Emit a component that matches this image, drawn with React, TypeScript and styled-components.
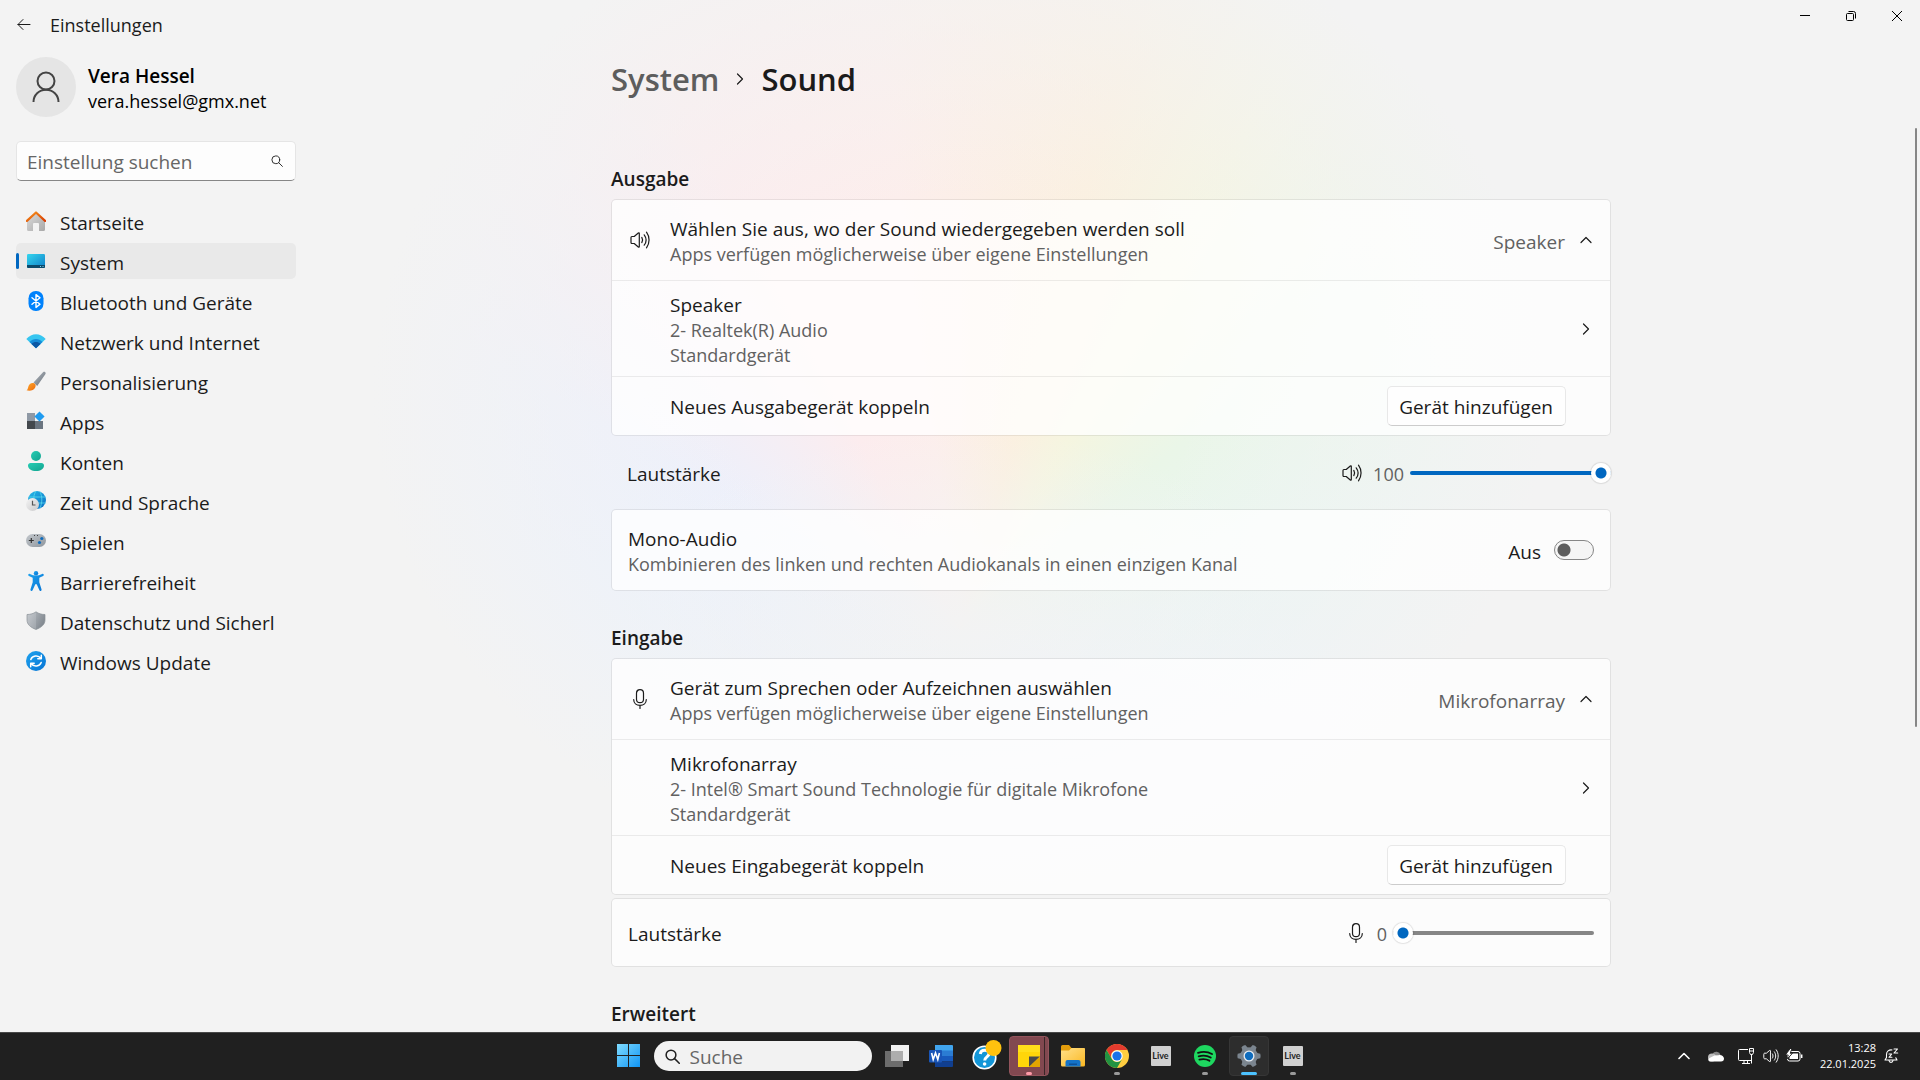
import React, { useState } from "react";
import styled, { createGlobalStyle } from "styled-components";

const GlobalStyle = createGlobalStyle`
  *, *::before, *::after { box-sizing: border-box; }
  body { margin: 0; background: #f3f3f3; }
  body, button, input { font-family: "Open Sans", "Noto Sans", sans-serif; }
  h1, h2, p, ul { margin: 0; padding: 0; font-weight: inherit; font-size: inherit; }
  svg { display: block; flex: none; }
`;

const Desktop = styled.div`
  height: 100vh;
  display: flex;
  flex-direction: column;
  overflow: hidden;
  font-size: 19px;
  line-height: 25px;
  color: #1b1b1b;
`;

const Window = styled.div`
  flex: 1;
  min-height: 0;
  display: flex;
  position: relative;
  overflow: hidden;
  background:
    radial-gradient(ellipse 34% 54% at 50% 38%, rgba(243, 243, 243, 0) 35%, #f3f3f3 90%),
    radial-gradient(ellipse 340px 190px at 50% 60%, rgba(243, 243, 243, 1), rgba(243, 243, 243, 0) 100%),
    conic-gradient(from -80deg at 50% 61%, #eaf1fd 0deg, #edf0fb 20deg, #fcecee 52deg, #fceeec 72deg, #fbf0e0 96deg, #f5f5e0 110deg, #eaf6e8 130deg, #e9f6f0 152deg, #eaf3fa 185deg, #eaf3fa 300deg, #eaf1fd 360deg);
`;

const Sidebar = styled.aside`
  flex: none;
  width: 302px;
  padding: 12px 6px 0 16px;
`;

const TitleRow = styled.header`
  display: flex;
  align-items: center;
  gap: 19px;
  height: 25px;
  font-size: 18px;
`;

const TitleText = styled.span`
  padding-top: 2px;
`;

const IconButton = styled.button`
  display: grid;
  place-items: center;
  padding: 0;
  border: 0;
  background: none;
  color: inherit;
`;

const Profile = styled.div`
  display: flex;
  align-items: center;
  gap: 12px;
  margin-top: 20px;
  color: #000;
`;

const ProfileText = styled.div`
  padding-top: 3px;
`;

const Avatar = styled.div`
  display: grid;
  place-items: center;
  width: 60px;
  height: 60px;
  border-radius: 50%;
  background: #e5e5e5;
`;

const Strong = styled.p`
  font-weight: 600;
`;

const Mail = styled.p`
  font-size: 18px;
`;

const SearchBox = styled.label`
  display: flex;
  align-items: center;
  width: 280px;
  height: 40px;
  margin: 24px 0 22px;
  padding: 0 12px 0 10px;
  border: 1px solid #e5e5e5;
  border-bottom-color: #868686;
  border-radius: 5px;
  background: #fdfdfd;
`;

const SearchInput = styled.input`
  flex: 1;
  min-width: 0;
  padding: 2px 0 0;
  border: 0;
  outline: 0;
  background: none;
  font-size: 19px;
  color: #1b1b1b;
  &::placeholder { color: #666; opacity: 1; }
`;

const NavList = styled.ul`
  display: flex;
  flex-direction: column;
  gap: 4px;
  list-style: none;
`;

const NavLink = styled.a<{ $active?: boolean }>`
  position: relative;
  display: flex;
  align-items: center;
  gap: 14px;
  width: 280px;
  height: 36px;
  padding-left: 10px;
  border-radius: 5px;
  background: ${(p) => (p.$active ? "#e9e9e9" : "transparent")};
  color: inherit;
  text-decoration: none;
  white-space: nowrap;
  &::before {
    content: "";
    display: ${(p) => (p.$active ? "block" : "none")};
    position: absolute;
    left: 0;
    top: 10px;
    width: 3px;
    height: 16px;
    border-radius: 2px;
    background: #0067c0;
  }
`;

const NavText = styled.span`
  padding-top: 4px;
`;

const Main = styled.main`
  flex: 1;
  min-width: 0;
  display: flex;
  justify-content: center;
`;

const Column = styled.div`
  flex: 1;
  max-width: 1000px;
  padding-top: 59px;
`;

const Heading = styled.h1`
  display: flex;
  align-items: center;
  gap: 15px;
  font-size: 31px;
  font-weight: 600;
  line-height: 40px;
`;

const Crumb = styled.a`
  color: #5d5d5d;
  text-decoration: none;
`;

const SectionTitle = styled.h2<{ $first?: boolean }>`
  margin: ${(p) => (p.$first ? "68px" : "35px")} 0 7px;
  font-weight: 600;
`;

const Card = styled.section<{ $top?: number }>`
  margin-top: ${(p) => p.$top ?? 0}px;
  border: 1px solid rgba(0, 0, 0, 0.07);
  border-radius: 5px;
  background: rgba(255, 255, 255, 0.76);
  background-clip: padding-box;
`;

const Row = styled.div<{ $height: number; $indent?: boolean; $right?: number }>`
  display: flex;
  align-items: center;
  min-height: ${(p) => p.$height}px;
  padding: 0 ${(p) => p.$right ?? 16}px 0 ${(p) => (p.$indent ? 58 : 16)}px;
  & + & { border-top: 1px solid rgba(0, 0, 0, 0.07); }
`;

const LeadIcon = styled.span`
  display: grid;
  place-items: center;
  width: 24px;
  margin-right: 18px;
`;

const Texts = styled.div`
  flex: 1;
  padding-top: 3px;
`;

const Sub = styled.p`
  font-size: 18px;
  color: #616161;
`;

const Value = styled.span`
  padding-top: 4px;
  margin-right: 13px;
  color: #616161;
`;

const Chevron = styled.span`
  display: grid;
  place-items: center;
  width: 16px;
`;

const AddButton = styled.button`
  height: 40px;
  padding: 2px 12px 0 11px;
  border: 1px solid #e8e8e8;
  border-bottom-color: #ccc;
  border-radius: 5px;
  background: #fefefe;
  color: #1b1b1b;
  font-size: 19px;
`;

const VolumeRow = styled.div<{ $loose?: boolean }>`
  display: flex;
  align-items: center;
  height: ${(p) => (p.$loose ? 73 : 67)}px;
  padding: ${(p) => (p.$loose ? "0 0 0 16px" : "0 16px")};
`;

const VolumeLabel = styled.label`
  flex: 1;
  padding-top: 3px;
`;

const VolumeValue = styled.output`
  margin: 0 6px 0 11px;
  padding-top: 3px;
  font-size: 18px;
  color: #616161;
`;

const Slider = styled.input<{ $fill: number }>`
  appearance: none;
  width: 201px;
  height: 20px;
  margin: 0;
  background: transparent;
  &::-webkit-slider-runnable-track {
    height: 4px;
    border-radius: 2px;
    background: linear-gradient(to right, #0067c0 ${(p) => p.$fill}%, #868686 ${(p) => p.$fill}%);
  }
  &::-webkit-slider-thumb {
    appearance: none;
    width: 20px;
    height: 20px;
    margin-top: -8px;
    border-radius: 50%;
    background: radial-gradient(circle, #0067c0 5px, #fff 6px);
    box-shadow: 0 0 1px 1px rgba(0, 0, 0, 0.1);
  }
`;

const Switch = styled.input`
  appearance: none;
  width: 40px;
  height: 20px;
  margin: 0 0 0 13px;
  border: 1px solid #868686;
  border-radius: 10px;
  background: radial-gradient(circle at 9px 9px, #5d5d5d 6px, #f5f5f5 7px);
  &:checked { background: radial-gradient(circle at 29px 9px, #fff 6px, #0067c0 7px); }
`;

const SwitchLabel = styled.label`
  display: flex;
  align-items: center;
`;

const SwitchText = styled.span`
  padding-top: 4px;
`;

const WindowButtons = styled.div`
  position: absolute;
  top: 0;
  right: 0;
  display: flex;
  & > button { width: 46px; height: 32px; }
`;

const ScrollThumb = styled.div`
  position: absolute;
  top: 128px;
  right: 3px;
  width: 2px;
  height: 58%;
  border-radius: 1px;
  background: #868686;
`;

const Taskbar = styled.footer`
  flex: none;
  position: relative;
  display: flex;
  align-items: center;
  justify-content: center;
  height: 48px;
  box-shadow: inset 0 1px #484848;
  background: #202020;
  color: #fff;
`;

const TaskSlot = styled.button<{ $tone?: "rose" | "active"; $mark?: string; $wide?: boolean }>`
  position: relative;
  display: grid;
  place-items: center;
  width: 40px;
  height: 40px;
  margin: 0 2px;
  padding: 0;
  border: 1px solid ${(p) => (p.$tone === "rose" ? "#93545c" : p.$tone ? "#363636" : "transparent")};
  border-radius: 4px;
  background: ${(p) => (p.$tone === "rose" ? "linear-gradient(90deg, #824850 34px, #3a2628 34px, #3a2628 35px, #824850 35px)" : p.$tone ? "#2d2d2d" : "none")};
  &::after {
    content: "";
    display: ${(p) => (p.$mark ? "block" : "none")};
    position: absolute;
    bottom: 0;
    width: ${(p) => (p.$wide ? 16 : 6)}px;
    height: 3px;
    border-radius: 2px;
    background: ${(p) => p.$mark};
  }
`;

const TaskSearch = styled.label`
  display: flex;
  align-items: center;
  gap: 10px;
  width: 218px;
  height: 30px;
  margin: 0 3px 0 4px;
  padding: 0 11px;
  border-radius: 15px;
  background: #f2f2f2;
  color: #202020;
`;

const Tray = styled.div`
  position: absolute;
  inset: 0 20px 0 auto;
  display: flex;
  align-items: center;
`;

const TrayItem = styled.button<{ $width: number }>`
  display: grid;
  place-items: center;
  width: ${(p) => p.$width}px;
  height: 40px;
  padding: 0;
  border: 0;
  background: none;
  color: #fff;
`;

const Clock = styled.time`
  margin: 0 6px 0 13px;
  font-size: 11px;
  line-height: 16px;
  text-align: right;
`;

const line = { fill: "none", stroke: "currentColor", strokeLinecap: "round", strokeLinejoin: "round" } as const;

const SpeakerIcon = ({ size = 20 }: { size?: number }) => (
  <svg width={size} height={size} viewBox="0 0 20 20" {...line} strokeWidth="1.2">
    <path d="M1 7.400c0-.5.4-.9.9-.9h2.300L8.300 3c.5-.4 1-.1 1 .4v13.200c0 .5-.5.8-1 .4l-4.100-3.500H1.900c-.5 0-.9-.4-.9-.9z" />
    <path d="M11.800 7.400c1 1.600 1 3.600 0 5.200M14.200 4.800c2.300 3.100 2.300 7.300 0 10.400M16.500 2.200c3.400 4.700 3.400 10.900 0 15.600" />
  </svg>
);

const MicIcon = () => (
  <svg width="20" height="20" viewBox="0 0 20 20" {...line} strokeWidth="1.2">
    <rect x="6.500" y="0.700" width="7" height="13" rx="3.500" />
    <path d="M3.700 10.500c0 3.500 2.700 5.900 6.300 5.900s6.300-2.400 6.300-5.900M10 16.500v2.900" />
  </svg>
);

const ChevronIcon = ({ up }: { up?: boolean }) => (
  <svg width="12" height="12" viewBox="0 0 12 12" {...line} strokeWidth="1.2">
    <path d={up ? "M1 8.500l5-5 5 5" : "M3.500 1l5 5-5 5"} />
  </svg>
);

const Magnifier = ({ size = 12, weight = 0.9 }: { size?: number; weight?: number }) => (
  <svg width={size} height={size} viewBox="0 0 12 12" {...line} strokeWidth={weight}>
    <circle cx="4.800" cy="4.800" r="3.900" />
    <path d="M7.700 7.700l3.700 3.700" />
  </svg>
);

const Defs = () => (
  <svg width="0" height="0" style={{ position: "absolute" }} aria-hidden="true">
    <defs>
      {[
        ["roof", "#f7941d", "#d83b01"],
        ["wall", "#dcdcdc", "#a8a8a8"],
        ["screen", "#35d6ee", "#0f7fc9"],
        ["handle", "#b4bac1", "#666e77"],
        ["tip", "#ffa92b", "#ee6a0c"],
        ["teal", "#26cdb4", "#12a38f"],
        ["globe", "#25b9e8", "#0a6fc4"],
        ["silver", "#f4f4f4", "#c9c9cb"],
        ["pad", "#c3c8cd", "#8e959c"],
        ["azure", "#1ea2ee", "#0774d4"],
        ["steelL", "#c6cacf", "#9fa5ab"],
        ["steelR", "#a7adb3", "#767d85"],
        ["tile", "#7fdbff", "#1095f4"],
        ["folder", "#ffe08a", "#fbb822"],
      ].map(([id, from, to]) => (
        <linearGradient key={id} id={id} x1="0" y1="0" x2="1" y2="1">
          <stop stopColor={from} />
          <stop offset="1" stopColor={to} />
        </linearGradient>
      ))}
    </defs>
  </svg>
);

const navArt: Record<string, React.ReactNode> = {
  home: (
    <>
      <path d="M1 9.500L10 1.500l9 8V18.500a1.500 1.500 0 0 1-1.500 1.500H13v-7a1 1 0 0 0-1-1H8a1 1 0 0 0-1 1v7H2.500A1.500 1.500 0 0 1 1 18.500z" fill="url(#wall)" />
      <path d="M.9 9.900L10 1.500l9.100 8.400" fill="none" stroke="url(#roof)" strokeWidth="2.2" strokeLinecap="round" strokeLinejoin="round" />
    </>
  ),
  system: (
    <>
      <rect x="1" y="3" width="18" height="14" rx="1.2" fill="url(#screen)" />
      <path d="M1 14h18v1.800a1.200 1.200 0 0 1-1.200 1.200H2.200A1.200 1.200 0 0 1 1 15.800z" fill="#0c4a6b" />
      <path d="M14 15.500h1M16.500 15.500h1" stroke="#7fd6f2" />
    </>
  ),
  bluetooth: (
    <>
      <rect x="2.500" width="15" height="20" rx="7.200" fill="#0082fc" />
      <path d="M6 6.800l8 6.400-4 3.200V3.600l4 3.200-8 6.400" fill="none" stroke="#fff" strokeWidth="1.4" strokeLinejoin="round" strokeLinecap="round" />
    </>
  ),
  wifi: (
    <>
      <path d="M.3 8C5.700 1.700 14.300 1.700 19.700 8L10 17.300z" fill="#36c5f0" />
      <path d="M3.500 11c3.700-4 9.300-4 13 0L10 17.300z" fill="#168bd8" />
      <path d="M5.500 13c2.500-2.600 6.500-2.600 9 0L10 17.300z" fill="#0b57a4" />
    </>
  ),
  brush: (
    <>
      <path d="M7.500 11.500L17 1.300c1.500-1.300 3.400.3 2.300 1.900L11.200 15z" fill="url(#handle)" />
      <path d="M.5 19.300c1.300-.8 1.400-2 1.800-3.600.6-2.500 2.900-4.300 5.200-3.700 2 .5 2.700 2.600 1.700 4.500-1.500 2.900-5.300 3.900-8.700 2.800z" fill="url(#tip)" />
    </>
  ),
  apps: (
    <>
      <path d="M1 2h8v8H1z" fill="#8f99a5" />
      <path d="M1 10h8v8H1z" fill="#43484d" />
      <path d="M9 10h8v8H9z" fill="#6b7580" />
      <path d="M13.500.4l5.100 5.100-5.100 5.100-5.100-5.100z" fill="#1f9bf0" />
    </>
  ),
  accounts: (
    <>
      <circle cx="10" cy="5" r="5" fill="url(#teal)" />
      <path d="M4.500 12h11c1.400 0 2.500 1 2.500 2.400 0 3.500-3.500 5.600-8 5.600s-8-2.100-8-5.600C2 13 3.100 12 4.500 12z" fill="url(#teal)" />
    </>
  ),
  time: (
    <>
      <circle cx="11" cy="9" r="9" fill="url(#globe)" />
      <path d="M3 6h16.500M11 12h9M10 0c-2 3-2.500 6-2 9M14 .8c2.500 5 2.300 11 0 16.300" stroke="#5fe0f0" strokeWidth=".9" fill="none" opacity=".8" />
      <circle cx="6.500" cy="13.500" r="6.500" fill="url(#silver)" />
      <path d="M6.500 9.800v4.200h3" stroke="#555" strokeWidth="1.2" fill="none" />
    </>
  ),
  games: (
    <>
      <rect y="3" width="20" height="13" rx="6.500" fill="url(#pad)" />
      <path d="M2.800 9.500h5M5.300 7v5" stroke="#333" strokeWidth="1.2" />
      <circle cx="15.800" cy="7.500" r="1.600" fill="#0f6cbd" />
      <circle cx="13.500" cy="11.500" r="1.600" fill="#0f6cbd" />
      <path d="M8 4.500h1M11 4.500h1" stroke="#444" />
    </>
  ),
  access: (
    <>
      <circle cx="10" cy="2.200" r="2.200" fill="url(#azure)" />
      <path d="M2.300 3.400c.3-.7 1-.8 1.600-.5 4 2 8.200 2 12.200 0 .6-.3 1.300-.2 1.600.5.300.7 0 1.200-.6 1.500l-3.800 1.900v4.500l2.200 7c.2.800 0 1.400-.7 1.600-.7.200-1.300-.1-1.500-.8L10.800 13.500c-.3-.8-1.300-.8-1.600 0l-2.500 5.600c-.3.700-.9 1-1.500.8-.7-.3-.9-.9-.7-1.600l2.200-7V6.800L2.900 4.900c-.6-.3-.9-.8-.6-1.500z" fill="url(#azure)" />
    </>
  ),
  shield: (
    <>
      <path d="M10 .8C7.500 2.600 4.500 3.500 1 3.500v5.500c0 4.500 3.500 7.300 9 9.500z" fill="url(#steelL)" />
      <path d="M10 .8c2.500 1.800 5.500 2.700 9 2.700v5.500c0 4.500-3.500 7.300-9 9.500z" fill="url(#steelR)" />
      <path d="M10 .8c2.500 1.800 5.500 2.700 9 2.700v5.500c0 4.500-3.500 7.300-9 9.500-5.500-2.200-9-5-9-9.500v-5.500c3.500 0 6.500-.9 9-2.700z" fill="none" stroke="#8a9097" strokeWidth=".7" />
    </>
  ),
  update: (
    <>
      <circle cx="10" cy="10" r="10" fill="url(#azure)" />
      <path d="M4.800 8.500C6.200 4.700 12 3.600 15 7.500M15.300 4.300v3.500h-3.500M15.200 11.500c-1.400 3.800-7.200 4.900-10.200 1M4.700 15.700v-3.500h3.500" fill="none" stroke="#fff" strokeWidth="1.5" strokeLinecap="round" strokeLinejoin="round" />
    </>
  ),
};

const navItems = [
  ["home", "Startseite"],
  ["system", "System"],
  ["bluetooth", "Bluetooth und Geräte"],
  ["wifi", "Netzwerk und Internet"],
  ["brush", "Personalisierung"],
  ["apps", "Apps"],
  ["accounts", "Konten"],
  ["time", "Zeit und Sprache"],
  ["games", "Spielen"],
  ["access", "Barrierefreiheit"],
  ["shield", "Datenschutz und Sicherl"],
  ["update", "Windows Update"],
];

const LiveText = styled.span`
  display: grid;
  place-items: center;
  width: 20px;
  height: 20px;
  border-radius: 1px;
  background: #d0d0d0;
  color: #222;
  font: 700 9px/20px Lato, sans-serif;
`;

const WordArt = () => (
  <svg width="24" height="22" viewBox="0 0 24 22">
    <path d="M6 0h17a1 1 0 0 1 1 1v5H6z" fill="#41a5ee" />
    <path d="M6 5.500h18V11H6z" fill="#2b7cd3" />
    <path d="M6 11h18v5.500H6z" fill="#185abd" />
    <path d="M6 16.500h18V21a1 1 0 0 1-1 1H6z" fill="#103f91" />
    <rect y="5" width="13" height="12.500" rx="1" fill="#1a56b8" />
    <path d="M2.600 8l1.600 6.500L6.500 8l2.300 6.500L10.400 8" fill="none" stroke="#fff" strokeWidth="1.6" />
  </svg>
);

const HelpArt = () => (
  <svg width="34" height="34" viewBox="0 0 34 34">
    <circle cx="16.500" cy="18.500" r="11.300" fill="#1396d8" stroke="#fff" strokeWidth="1.6" />
    <path d="M12.300 15c.5-5.200 9-5 8.700 0-.3 3-4.300 3-4.300 6.500" fill="none" stroke="#fff" strokeWidth="3" />
    <circle cx="16.600" cy="25" r="1.800" fill="#fff" />
    <circle cx="25.500" cy="9" r="8" fill="#ffc20e" />
  </svg>
);

const NotesArt = () => (
  <svg width="22" height="22" viewBox="0 0 22 22">
    <path d="M0 0h22v22H0z" fill="#ffd60a" />
    <path d="M0 0h22v7H0z" fill="#ffdf1b" />
    <path d="M11 22V11.500h11z" fill="#4a4a4a" />
    <path d="M11 22l11-10.500V22z" fill="#e3a500" />
  </svg>
);

const FolderArt = () => (
  <svg width="24" height="22" viewBox="0 0 24 22">
    <path d="M0 1.500A1.500 1.500 0 0 1 1.500 0H8l2.500 3H22a2 2 0 0 1 2 2v4H0z" fill="#e39d0c" />
    <path d="M0 5.500h8L10.500 3H23a1 1 0 0 1 1 1v16a1.500 1.500 0 0 1-1.500 1.500h-21A1.500 1.500 0 0 1 0 20z" fill="url(#folder)" />
    <path d="M4.500 21.500V17a2 2 0 0 1 2-2h11a2 2 0 0 1 2 2v4.500z" fill="#1473c8" />
    <path d="M8 18.500h8V20H8z" fill="#0d5299" />
  </svg>
);

const ChromeArt = () => (
  <svg width="24" height="24" viewBox="0 0 24 24">
    <circle cx="12" cy="12" r="12" fill="#ffcd40" />
    <path d="M1.600 6A12 12 0 0 1 22.400 6H12a6 6 0 0 0-5.200 9z" fill="#e33b2e" />
    <path d="M1.600 6A12 12 0 0 0 12 24l5.200-9A6 6 0 0 1 6.800 15z" fill="#229342" />
    <circle cx="12" cy="12" r="5.700" fill="#fff" />
    <circle cx="12" cy="12" r="4.600" fill="#1a73e8" />
  </svg>
);

const SpotifyArt = () => (
  <svg width="22" height="22" viewBox="0 0 22 22">
    <circle cx="11" cy="11" r="11" fill="#1ed760" />
    <path d="M4 7.800c4.800-1.400 10-1 14 1.200M4.700 11.300c4.200-1.200 8.500-.8 12 1.200M5.400 14.600c3.500-.9 7-.6 10 1.100" fill="none" stroke="#111" strokeWidth="1.9" strokeLinecap="round" />
  </svg>
);

const GearArt = () => (
  <svg width="24" height="24" viewBox="0 0 24 24">
    {[0, 60, 120, 180, 240, 300].map((a) => (
      <path key={a} d="M8.800 5l1-4.300q2.200-.6 4.400 0l1 4.300z" fill="#7b858f" transform={`rotate(${a + 30} 12 12)`} />
    ))}
    <circle cx="12" cy="12" r="8.800" fill="#7b858f" />
    <circle cx="12" cy="12" r="5.500" fill="#e8edf2" />
    <circle cx="12" cy="12" r="4.200" fill="#0f6cbd" />
  </svg>
);

const tasks: { name: string; art: React.ReactNode; tone?: "rose" | "active"; mark?: string; wide?: boolean }[] = [
  {
    name: "Aktive Anwendungen",
    art: (
      <svg width="24" height="22" viewBox="0 0 24 22">
        <path d="M6 0h18v16H6z" fill="#f1f1f1" />
        <path d="M0 6h18v16H0z" fill="#6d6d6d" />
        <path d="M6 6h12v10H6z" fill="#adadad" />
      </svg>
    ),
  },
  { name: "Word", art: <WordArt /> },
  { name: "Hilfe", art: <HelpArt /> },
  { name: "Kurznotizen", art: <NotesArt />, tone: "rose", mark: "#ff9aa8" },
  { name: "Explorer", art: <FolderArt /> },
  { name: "Chrome", art: <ChromeArt />, mark: "#9a9a9a" },
  { name: "Live", art: <LiveText>Live</LiveText> },
  { name: "Spotify", art: <SpotifyArt />, mark: "#9a9a9a" },
  { name: "Einstellungen", art: <GearArt />, tone: "active", mark: "#4cc2ff", wide: true },
  { name: "Live 2", art: <LiveText>Live</LiveText>, mark: "#9a9a9a" },
];

interface DeviceCardProps {
  icon: React.ReactNode;
  title: string;
  device: string;
  detail: string;
  pair: string;
}

const DeviceCard = ({ icon, title, device, detail, pair }: DeviceCardProps) => (
  <Card>
    <Row $height={80}>
      <LeadIcon>{icon}</LeadIcon>
      <Texts>
        <p>{title}</p>
        <Sub>Apps verfügen möglicherweise über eigene Einstellungen</Sub>
      </Texts>
      <Value>{device}</Value>
      <Chevron><ChevronIcon up /></Chevron>
    </Row>
    <Row $height={96} $indent>
      <Texts>
        <p>{device}</p>
        <Sub>{detail}</Sub>
        <Sub>Standardgerät</Sub>
      </Texts>
      <Chevron><ChevronIcon /></Chevron>
    </Row>
    <Row $height={59} $indent $right={44}>
      <Texts>{pair}</Texts>
      <AddButton type="button">Gerät hinzufügen</AddButton>
    </Row>
  </Card>
);

interface VolumeProps {
  id: string;
  icon: React.ReactNode;
  initial: number;
  loose?: boolean;
}

const Volume = ({ id, icon, initial, loose }: VolumeProps) => {
  const [value, setValue] = useState(initial);
  return (
    <VolumeRow $loose={loose}>
      <VolumeLabel htmlFor={id}>Lautstärke</VolumeLabel>
      {icon}
      <VolumeValue htmlFor={id}>{value}</VolumeValue>
      <Slider id={id} type="range" min={0} max={100} value={value} $fill={value} onChange={(e) => setValue(Number(e.target.value))} />
    </VolumeRow>
  );
};

export default function App() {
  const [mono, setMono] = useState(false);
  return (
    <Desktop>
      <GlobalStyle />
      <Defs />
      <Window>
        <Sidebar>
          <TitleRow>
            <IconButton type="button" aria-label="Zurück">
              <svg width="15" height="12" viewBox="0 0 15 12" {...line} strokeWidth="1">
                <path d="M14 5.500H2M7 .5l-5 5 5 5" />
              </svg>
            </IconButton>
            <TitleText>Einstellungen</TitleText>
          </TitleRow>
          <Profile>
            <Avatar>
              <svg width="28" height="32" viewBox="0 0 28 32" fill="none" stroke="#444" strokeWidth="2">
                <circle cx="14" cy="10" r="8.500" />
                <path d="M1.500 31c0-7 5.500-12.300 12.500-12.300S26.500 24 26.500 31" />
              </svg>
            </Avatar>
            <ProfileText>
              <Strong>Vera Hessel</Strong>
              <Mail>vera.hessel@gmx.net</Mail>
            </ProfileText>
          </Profile>
          <SearchBox>
            <SearchInput type="search" placeholder="Einstellung suchen" aria-label="Einstellung suchen" />
            <Magnifier />
          </SearchBox>
          <nav>
            <NavList>
              {navItems.map(([key, label]) => (
                <li key={key}>
                  <NavLink href={`#${key}`} $active={key === "system"}>
                    <svg width="20" height="20" viewBox="0 0 20 20">{navArt[key]}</svg>
                    <NavText>{label}</NavText>
                  </NavLink>
                </li>
              ))}
            </NavList>
          </nav>
        </Sidebar>
        <Main>
          <Column>
            <Heading>
              <Crumb href="#system">System</Crumb>
              <ChevronIcon />
              <span>Sound</span>
            </Heading>
            <SectionTitle $first>Ausgabe</SectionTitle>
            <DeviceCard
              icon={<SpeakerIcon />}
              title="Wählen Sie aus, wo der Sound wiedergegeben werden soll"
              device="Speaker"
              detail="2- Realtek(R) Audio"
              pair="Neues Ausgabegerät koppeln"
            />
            <Volume id="output-volume" icon={<SpeakerIcon />} initial={100} loose />
            <Card>
              <Row $height={80}>
                <Texts>
                  <p>Mono-Audio</p>
                  <Sub>Kombinieren des linken und rechten Audiokanals in einen einzigen Kanal</Sub>
                </Texts>
                <SwitchLabel>
                  <SwitchText>{mono ? "Ein" : "Aus"}</SwitchText>
                  <Switch type="checkbox" role="switch" checked={mono} onChange={(e) => setMono(e.target.checked)} />
                </SwitchLabel>
              </Row>
            </Card>
            <SectionTitle>Eingabe</SectionTitle>
            <DeviceCard
              icon={<MicIcon />}
              title="Gerät zum Sprechen oder Aufzeichnen auswählen"
              device="Mikrofonarray"
              detail="2- Intel® Smart Sound Technologie für digitale Mikrofone"
              pair="Neues Eingabegerät koppeln"
            />
            <Card $top={3}>
              <Volume id="input-volume" icon={<MicIcon />} initial={0} />
            </Card>
            <SectionTitle>Erweitert</SectionTitle>
          </Column>
        </Main>
        <WindowButtons>
          <IconButton type="button" aria-label="Minimieren">
            <svg width="10" height="10" viewBox="0 0 10 10" stroke="#000"><path d="M0 4.500h10" /></svg>
          </IconButton>
          <IconButton type="button" aria-label="Wiederherstellen">
            <svg width="10" height="10" viewBox="0 0 10 10" fill="none" stroke="#000">
              <rect x=".5" y="2.500" width="7" height="7" rx="1" />
              <path d="M2.500.5H7.500a2 2 0 0 1 2 2V7.500" />
            </svg>
          </IconButton>
          <IconButton type="button" aria-label="Schließen">
            <svg width="10" height="10" viewBox="0 0 10 10" stroke="#000"><path d="M0 0l10 10M10 0L0 10" /></svg>
          </IconButton>
        </WindowButtons>
        <ScrollThumb />
      </Window>
      <Taskbar>
        <TaskSlot type="button" aria-label="Start">
          <svg width="24" height="24" viewBox="0 0 24 24" fill="url(#tile)">
            <path d="M1 0h11v11H1zM13 0h11v11H13zM1 12h11v11H1zM13 12h11v11H13z" />
          </svg>
        </TaskSlot>
        <TaskSearch>
          <Magnifier size={15} weight={1.2} />
          <SearchInput type="search" placeholder="Suche" aria-label="Suche" />
        </TaskSearch>
        {tasks.map((t) => (
          <TaskSlot key={t.name} type="button" aria-label={t.name} $tone={t.tone} $mark={t.mark} $wide={t.wide}>
            {t.art}
          </TaskSlot>
        ))}
        <Tray>
          <TrayItem type="button" aria-label="Ausgeblendete Symbole" $width={32}>
            <svg width="12" height="12" viewBox="0 0 12 12" {...line} strokeWidth="1.6"><path d="M1 8.500l5-5 5 5" /></svg>
          </TrayItem>
          <TrayItem type="button" aria-label="OneDrive" $width={32}>
            <svg width="16" height="12" viewBox="0 0 16 12">
              <path d="M4.500 4a4.300 4.300 0 0 1 8 1l-4 4z" fill="#8b8b8b" />
              <circle cx="4" cy="7.500" r="4" fill="#bdbdbd" />
              <path d="M2.500 11.500C0 11.500 0 9 1.500 8l5-2.500 4-.3c2-1 5.500.6 5.500 3.300a3 3 0 0 1-3 3z" fill="#fff" />
            </svg>
          </TrayItem>
          <TrayItem type="button" aria-label="Netzwerk" $width={28}>
            <svg width="16" height="16" viewBox="0 0 16 16" fill="none" stroke="#fff">
              <path d="M10 1.500H1.500a1 1 0 0 0-1 1v9a1 1 0 0 0 1 1h12M6 12.500v3M9.500 12.500v3M4 15.500h8M13.500 6.500v9M11.500.5h4v4l-1 2h-2l-1-2zM12 3h3" />
            </svg>
          </TrayItem>
          <TrayItem type="button" aria-label="Lautstärke" $width={23}>
            <SpeakerIcon size={16} />
          </TrayItem>
          <TrayItem type="button" aria-label="Akku" $width={24}>
            <svg width="17" height="14" viewBox="0 0 17 14">
              <rect x="1.500" y="2.500" width="12.500" height="9.500" rx="2" fill="none" stroke="#fff" />
              <path d="M5.500 4.500h6.500v5.500H3.500V8z" fill="#fff" />
              <path d="M15.700 5.500v3.500" stroke="#fff" strokeWidth="1.5" />
              <path d="M4.200-.5L-.5 6h2.700l-1 4L6.500 4.300H4.200L6-.5z" fill="#fff" stroke="#202020" strokeWidth=".9" />
            </svg>
          </TrayItem>
          <Clock dateTime="2025-01-22T13:28">
            <div>13:28</div>
            <div>22.01.2025</div>
          </Clock>
          <TrayItem type="button" aria-label="Benachrichtigungen" $width={18}>
            <svg width="15" height="16" viewBox="0 0 15 16" {...line} strokeWidth="1.1">
              <path d="M8 2C5 1.500 2.500 3.500 2.500 6.500V9.500L1 12h12l-1.200-2.200M5 12.500c.3 2.500 3.700 2.500 4 0" />
              <path d="M5 6h2.700L5 9.300h2.900M10 1h3.500L10 5h3.700" />
            </svg>
          </TrayItem>
        </Tray>
      </Taskbar>
    </Desktop>
  );
}
